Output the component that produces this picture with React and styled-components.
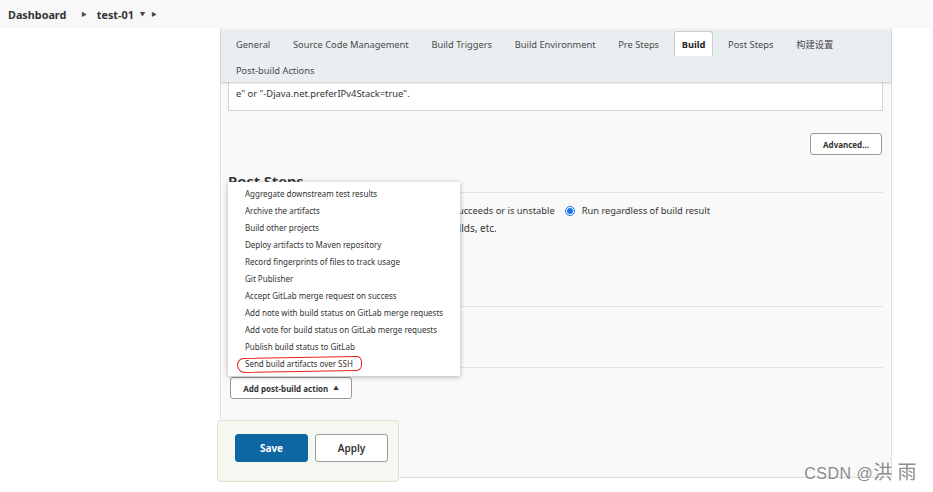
import React from "react";
import styled, { createGlobalStyle } from "styled-components";

const Global = createGlobalStyle`
  html, body { margin: 0; padding: 0; background: #fff; }
  body { font-family: "Noto Sans", "Noto Sans CJK SC", sans-serif; color: #333; width: 933px; height: 492px; overflow: hidden; position: relative; }
`;

const Breadcrumb = styled.div`
  height: 28px;
  width: 930px;
  background: #f8f8f8;
  display: flex;
  align-items: center;
  padding-left: 8px;
  box-sizing: border-box;
  font-size: 10.8px;
  font-weight: 700;
  color: #333;
`;

const Crumb = styled.span`
  margin-right: ${(p) => p.$mr || 0}px;
`;

const Caret = styled.span`
  font-size: 5.5px;
  color: #444;
  margin-right: ${(p) => p.$mr || 0}px;
`;

const Main = styled.div`
  display: flex;
  padding-left: 220px;
`;

const Panel = styled.div`
  width: 672px;
  height: 450px;
  box-sizing: border-box;
  border-left: 1px solid #e2e2e2;
  border-right: 1px solid #e2e2e2;
  border-bottom: 1px solid #dcdcdc;
  background: #f9f9f9;
  display: flex;
  flex-direction: column;
`;

const TabBar = styled.div`
  height: 54px;
  box-sizing: border-box;
  margin-top: 1px;
  background: #e9eef1;
  box-shadow: 0 1px 2px rgba(0, 0, 0, 0.22);
  display: flex;
  flex-wrap: wrap;
  align-content: flex-start;
  padding: 2px 0 0 7px;
  position: relative;
  z-index: 2;
`;

const Tab = styled.div`
  height: 25px;
  display: flex;
  align-items: center;
  padding: 0 7px;
  margin-right: 6.7px;
  font-size: 9.3px;
  color: ${(p) => (p.$active ? "#222" : "#4a4a4a")};
  font-weight: ${(p) => (p.$active ? 700 : 400)};
  background: ${(p) => (p.$active ? "#fff" : "transparent")};
  border: 1px solid ${(p) => (p.$active ? "#c9ced2" : "transparent")};
  border-bottom: none;
  border-radius: 3px 3px 0 0;
  box-sizing: border-box;
  ${(p) => (p.$newRow ? "margin-top: 1px;" : "")}
`;

const Content = styled.div`
  padding: 0 8px 0 7px;
  display: flex;
  flex-direction: column;
  flex: 1;
`;

const TextBox = styled.div`
  height: 29px;
  box-sizing: border-box;
  background: #fff;
  border: 1px solid #d4d4d4;
  border-top: none;
  padding: 5px 0 0 7px;
  font-size: 9.4px;
  line-height: 14px;
  color: #333;
`;

const RightRow = styled.div`
  display: flex;
  justify-content: flex-end;
  margin-top: 22px;
  padding-right: 1px;
`;

const SmallButton = styled.button`
  height: 22px;
  padding: 0;
  background: #fff;
  border: 1px solid #9a9a9a;
  border-radius: 3px;
  font-family: inherit;
  font-size: 8px;
  font-weight: 700;
  color: #333;
  display: flex;
  align-items: center;
  gap: 5px;
  box-sizing: border-box;
  width: ${(p) => p.$w}px;
  justify-content: center;
  white-space: nowrap;
`;

const TinyCaret = styled.span`
  font-size: 5.5px;
`;

const SectionHeader = styled.div`
  margin-top: 16px;
  font-size: 15px;
  font-weight: 600;
  line-height: 20px;
  height: 21px;
  border-bottom: 1px solid #e3e3e3;
  color: #333;
`;

const RadioRow = styled.div`
  margin-top: 9px;
  display: flex;
  align-items: center;
  height: 17px;
  font-size: 9.3px;
  padding-left: 20px;
  white-space: nowrap;
`;

const RadioItem = styled.label`
  display: flex;
  align-items: center;
  gap: 7px;
  margin-right: 10px;
`;

const RadioDot = styled.span`
  width: 10px;
  height: 10px;
  border-radius: 50%;
  box-sizing: border-box;
  border: 1px solid ${(p) => (p.$on ? "#1a73e8" : "#767676")};
  background: #fff;
  display: inline-flex;
  align-items: center;
  justify-content: center;
  &::after {
    content: "";
    width: 6px;
    height: 6px;
    border-radius: 50%;
    background: ${(p) => (p.$on ? "#1a73e8" : "transparent")};
  }
`;

const HelpLine = styled.div`
  height: 18px;
  line-height: 18px;
  font-size: 10px;
  padding-left: 10px;
  white-space: nowrap;
`;

const Divider = styled.div`
  height: 1px;
  background: #e3e3e3;
  margin-top: ${(p) => p.$mt}px;
`;

const ActionWrap = styled.div`
  position: relative;
  margin-top: 9px;
  margin-left: 2px;
  align-self: flex-start;
`;

const Menu = styled.div`
  position: absolute;
  left: -2px;
  bottom: calc(100% + 1px);
  width: 232px;
  height: 194px;
  box-sizing: border-box;
  background: #fff;
  box-shadow: 0 1px 5px rgba(0, 0, 0, 0.3);
  padding-top: 3px;
  z-index: 3;
`;

const MenuItem = styled.div`
  height: 17px;
  line-height: 17px;
  padding-left: 17px;
  font-size: 8px;
  color: #333;
  white-space: nowrap;
  position: relative;
`;

const Circled = styled.span`
  position: relative;
  &::before {
    content: "";
    position: absolute;
    left: -8px;
    right: -9px;
    top: -1px;
    bottom: -3px;
    border: 1.5px solid #e8231f;
    border-radius: 12px 9px 10px 14px;
    transform: rotate(-1deg);
  }
`;

const SaveBar = styled.div`
  margin-top: 21px;
  margin-left: -11px;
  width: 182px;
  height: 62px;
  box-sizing: border-box;
  background: #f4f8f1;
  border: 1px solid #d7e4d2;
  border-radius: 4px;
  display: flex;
  align-items: flex-start;
  gap: 7px;
  padding: 13px 0 0 17px;
  position: relative;
  z-index: 2;
`;

const BigButton = styled.button`
  width: 73px;
  height: 28px;
  box-sizing: border-box;
  border-radius: 3px;
  font-family: inherit;
  font-size: 10px;
  font-weight: ${(p) => (p.$primary ? 700 : 600)};
  color: ${(p) => (p.$primary ? "#fff" : "#333")};
  background: ${(p) => (p.$primary ? "#0e66a2" : "#fff")};
  border: 1px solid ${(p) => (p.$primary ? "#0e66a2" : "#9a9a9a")};
`;

const Watermark = styled.div`
  position: absolute;
  right: 16px;
  bottom: 8px;
  font-size: 16px;
  line-height: 20px;
  color: #8c8c8c;
  font-family: "Liberation Sans", "Noto Sans CJK SC", sans-serif;
  letter-spacing: 0.5px;
  white-space: nowrap;
`;

const WatermarkCjk = styled.span`
  font-family: "Noto Sans CJK SC", sans-serif;
  font-size: 19px;
`;

const tabs1 = ["General", "Source Code Management", "Build Triggers", "Build Environment", "Pre Steps", "Build", "Post Steps", "构建设置"];

const menuItems = [
  "Aggregate downstream test results",
  "Archive the artifacts",
  "Build other projects",
  "Deploy artifacts to Maven repository",
  "Record fingerprints of files to track usage",
  "Git Publisher",
  "Accept GitLab merge request on success",
  "Add note with build status on GitLab merge requests",
  "Add vote for build status on GitLab merge requests",
  "Publish build status to GitLab",
];

export default function App() {
  return (
    <>
      <Global />
      <Breadcrumb>
        <Crumb $mr={15}>Dashboard</Crumb>
        <Caret $mr={10}>▶</Caret>
        <Crumb $mr={6}>test-01</Crumb>
        <Caret $mr={6}>▼</Caret>
        <Caret>▶</Caret>
      </Breadcrumb>
      <Main>
        <Panel>
          <TabBar>
            {tabs1.map((t) => (
              <Tab key={t} $active={t === "Build"}>{t}</Tab>
            ))}
            <Tab $newRow>Post-build Actions</Tab>
          </TabBar>
          <Content>
            <TextBox>e" or "-Djava.net.preferIPv4Stack=true".</TextBox>
            <RightRow>
              <SmallButton $w={72}>Advanced...</SmallButton>
            </RightRow>
            <SectionHeader>Post Steps</SectionHeader>
            <RadioRow>
              <RadioItem><RadioDot />Run only if succeeds</RadioItem>
              <RadioItem><RadioDot />Run only if build succeeds or is unstable</RadioItem>
              <RadioItem><RadioDot $on />Run regardless of build result</RadioItem>
            </RadioRow>
            <HelpLine>Choose whether the steps should run for all builds, etc.</HelpLine>
            <Divider $mt={69} />
            <Divider $mt={60} />
            <ActionWrap>
              <Menu>
                {menuItems.map((m) => (
                  <MenuItem key={m}>{m}</MenuItem>
                ))}
                <MenuItem>
                  <Circled>Send build artifacts over SSH</Circled>
                </MenuItem>
              </Menu>
              <SmallButton $w={122}>Add post-build action <TinyCaret>▲</TinyCaret></SmallButton>
            </ActionWrap>
            <SaveBar>
              <BigButton $primary>Save</BigButton>
              <BigButton>Apply</BigButton>
            </SaveBar>
          </Content>
        </Panel>
      </Main>
      <Watermark>CSDN @<WatermarkCjk>洪 雨</WatermarkCjk></Watermark>
    </>
  );
}
